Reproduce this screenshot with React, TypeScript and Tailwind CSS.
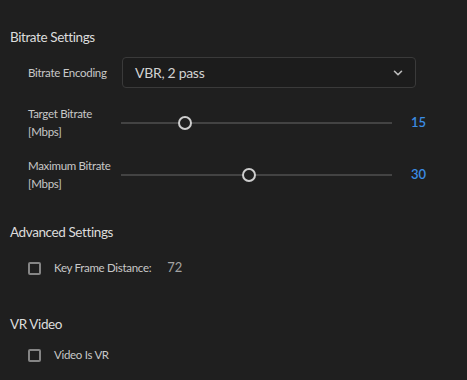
import { ChevronDown } from "lucide-react";

const font = { fontFamily: "Lato, 'Open Sans', sans-serif" };

function Slider({ value, max }: { value: number; max: number }) {
  const pct = (value / max) * 100;
  return (
    <div className="relative w-[271px] h-[16px] flex items-center">
      <div className="w-full h-[2px] bg-[#434343]" />
      <div
        className="absolute top-[1px] w-[14px] h-[14px] -ml-[7px] rounded-full border-2 border-[#cdcdcd] bg-[#1f1f1f]"
        style={{ left: `${pct}%` }}
      />
    </div>
  );
}

function SliderRow({ label, value, max }: { label: string; value: number; max: number }) {
  return (
    <div className="flex items-center pl-[18px]">
      <div className="w-[93px] text-[11.5px] tracking-[-0.3px] leading-[18px] text-[#c8c8c8]">
        {label}
        <br />
        [Mbps]
      </div>
      <Slider value={value} max={max} />
      <div className="ml-[19px] text-[13px] text-[#3b8de4] font-semibold">{value}</div>
    </div>
  );
}

function Check({ label, value }: { label: string; value?: string }) {
  return (
    <div className="flex items-center h-5 pl-[18px]">
      <div className="w-[13px] h-[13px] border-2 border-[#858585] rounded-[2px]" />
      <span className="ml-[13px] text-[11.5px] tracking-[-0.3px] text-[#c8c8c8]">{label}</span>
      {value && <span className="ml-[16px] text-[13px] text-[#a3a3a3]">{value}</span>}
    </div>
  );
}

export default function App() {
  return (
    <div className="w-full h-[380px] bg-[#1f1f1f] pl-[10px] pt-[27px]" style={font}>
      <h2 className="h-5 leading-5 text-[13.5px] tracking-[-0.4px] text-[#dcdcdc]">Bitrate Settings</h2>

      <div className="mt-[10px] flex items-center pl-[18px]">
        <div className="w-[94px] text-[11.5px] tracking-[-0.3px] text-[#c8c8c8]">Bitrate Encoding</div>
        <div className="w-[294px] h-[31px] rounded-[4px] border border-[#3a3a3a] bg-[#1c1c1c] flex items-center justify-between pl-[12px] pr-[10px]">
          <span className="text-[14px] tracking-[-0.3px] text-[#d2d2d2]">VBR, 2 pass</span>
          <ChevronDown size={14} strokeWidth={2.75} className="text-[#bdbdbd]" />
        </div>
      </div>

      <div className="mt-[17px]">
        <SliderRow label="Target Bitrate" value={15} max={63.5} />
      </div>
      <div className="mt-[16px]">
        <SliderRow label="Maximum Bitrate" value={30} max={63.5} />
      </div>

      <h2 className="mt-[29px] h-5 leading-5 text-[13.5px] tracking-[-0.4px] text-[#dcdcdc]">Advanced Settings</h2>
      <div className="mt-[16px]">
        <Check label="Key Frame Distance:" value="72" />
      </div>

      <h2 className="mt-[36px] h-5 leading-5 text-[13.5px] tracking-[-0.4px] text-[#dcdcdc]">VR Video</h2>
      <div className="mt-[11px]">
        <Check label="Video Is VR" />
      </div>
    </div>
  );
}
